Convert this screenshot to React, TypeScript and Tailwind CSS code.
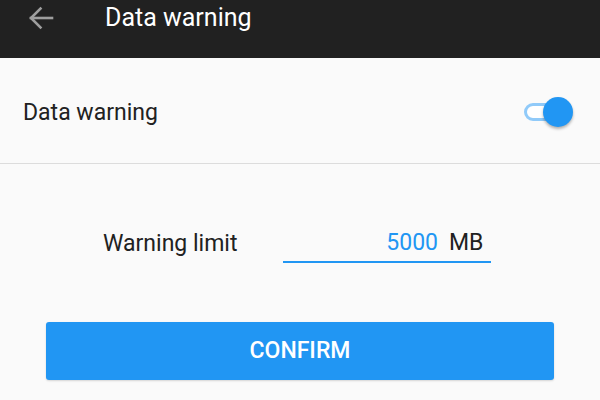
export default function App() {
  return (
    <div className="w-[600px] h-[400px] overflow-hidden bg-[#fafafa] font-['Roboto',sans-serif]">
      {/* Toolbar */}
      <div className="h-[58px] bg-[#212121] flex items-start">
        <div className="w-[105px] pl-[27px] pt-[5px]">
          <svg width="28" height="26" viewBox="0 0 28 26" fill="none" stroke="#9e9e9e" strokeWidth="2.6" strokeLinecap="square">
            <path d="M4 13 H25" />
            <path d="M13.5 3.5 L4 13 L13.5 22.5" strokeLinejoin="miter" />
          </svg>
        </div>
        <span className="text-white text-[25px] leading-[34px] pt-[1px]">Data warning</span>
      </div>

      {/* Switch row */}
      <div className="h-[106px] flex items-center justify-between pl-[23px] pr-[28px] pt-[6px] border-b border-[#dcdcdc]">
        <span className="text-[#212121] text-[23px]">Data warning</span>
        <div className="relative w-[48px] h-[30px] -mt-[3px] flex items-center">
          <div className="w-[36px] h-[18px] rounded-full border-[3px] border-[#90caf9] bg-white" />
          <div className="absolute right-[-1px] top-[0px] w-[30px] h-[30px] rounded-full bg-[#2196f3] shadow-[0_2px_3px_rgba(0,0,0,0.3)]" />
        </div>
      </div>

      {/* Limit input */}
      <div className="flex items-center pl-[103px] pt-[62px]">
        <span className="w-[180px] text-[#212121] text-[23px]">Warning limit</span>
        <div className="relative w-[208px] h-[37px] flex items-center border-b-2 border-[#2196f3]">
          <span className="w-[155px] text-right text-[#2196f3] text-[23px]">5000</span>
          <span className="ml-[11px] text-[#212121] text-[23px]">MB</span>
        </div>
      </div>

      {/* Confirm button */}
      <div className="px-[46px] pt-[59px]">
        <button className="w-full h-[58px] rounded-[3px] bg-[#2196f3] text-white text-[23px] font-medium shadow-[0_1px_2px_rgba(0,0,0,0.15)]">
          CONFIRM
        </button>
      </div>
    </div>
  );
}
